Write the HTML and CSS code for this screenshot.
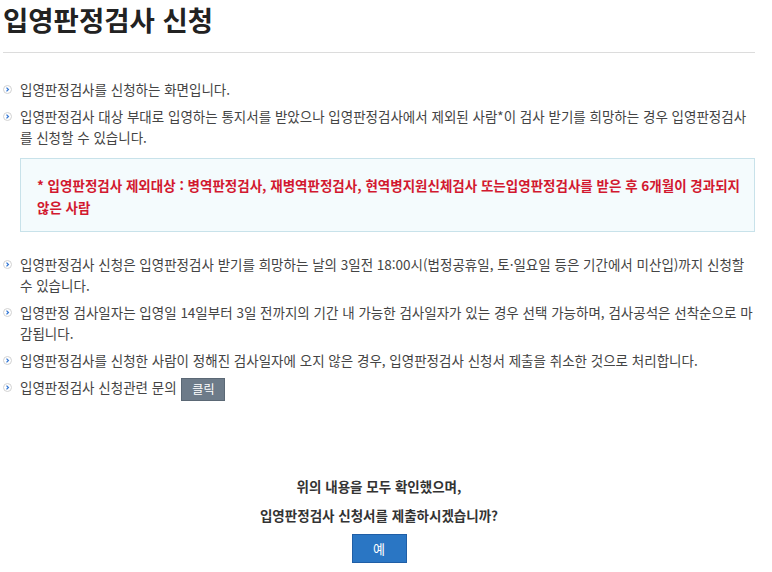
FILE: index.html
```html
<!DOCTYPE html>
<html lang="ko">
<head>
<meta charset="utf-8">
<title>입영판정검사 신청</title>
<link rel="stylesheet" href="styles.css">
</head>
<body>
<div class="page">
  <h1 class="title">입영판정검사 신청</h1>
  <ul class="info">
    <li class="item">입영판정검사를 신청하는 화면입니다.</li>
    <li class="item">입영판정검사 대상 부대로 입영하는 통지서를 받았으나 입영판정검사에서 제외된 사람*이 검사 받기를 희망하는 경우 입영판정검사를 신청할 수 있습니다.</li>
  </ul>
  <div class="notice">* 입영판정검사 제외대상 : 병역판정검사, 재병역판정검사, 현역병지원신체검사 또는입영판정검사를 받은 후 6개월이 경과되지 않은 사람</div>
  <ul class="info">
    <li class="item">입영판정검사 신청은 입영판정검사 받기를 희망하는 날의 3일전 18:00시(법정공휴일, 토·일요일 등은 기간에서 미산입)까지 신청할 수 있습니다.</li>
    <li class="item">입영판정 검사일자는 입영일 14일부터 3일 전까지의 기간 내 가능한 검사일자가 있는 경우 선택 가능하며, 검사공석은 선착순으로 마감됩니다.</li>
    <li class="item">입영판정검사를 신청한 사람이 정해진 검사일자에 오지 않은 경우, 입영판정검사 신청서 제출을 취소한 것으로 처리합니다.</li>
    <li class="item">입영판정검사 신청관련 문의 <button class="btn-small" type="button">클릭</button></li>
  </ul>
  <div class="confirm">
    <p class="confirm-line">위의 내용을 모두 확인했으며,</p>
    <p class="confirm-line">입영판정검사 신청서를 제출하시겠습니까?</p>
    <button class="btn-yes" type="button">예</button>
  </div>
</div>
</body>
</html>
```

FILE: styles.css
```css
html, body {
  margin: 0;
  padding: 0;
  background: #fff;
}
body {
  font-family: "Noto Sans CJK KR", "Noto Sans", sans-serif;
  color: #444;
  font-size: 13.5px;
}
.page {
  width: 752px;
  padding: 0 0 0 3px;
}
.title {
  margin: 0;
  padding: 1px 0 0 0;
  height: 51px;
  line-height: 36px;
  font-size: 27.5px;
  font-weight: 700;
  color: #222;
  border-bottom: 1px solid #dcdcdc;
}
.info {
  list-style: none;
  margin: 0;
  padding: 0;
}
.info:first-of-type {
  margin-top: 26px;
}
.item {
  position: relative;
  padding-left: 17px;
  line-height: 21px;
  margin-bottom: 6px;
}
.item::before {
  content: "";
  position: absolute;
  left: 0;
  top: 6px;
  width: 9px;
  height: 9px;
  border: 1px solid #d2d2d2;
  border-radius: 50%;
  box-sizing: border-box;
  background:
    url("data:image/svg+xml;utf8,<svg xmlns='http://www.w3.org/2000/svg' width='9' height='9' viewBox='0 0 9 9'><path d='M3.5 2.6 L5.4 4.5 L3.5 6.4' fill='none' stroke='%233a7bd5' stroke-width='1.3'/></svg>") center/9px 9px no-repeat;
}
.notice {
  margin: 10px 0 22px 17px;
  padding: 15px 8px 13px 16px;
  background: #f4fbfd;
  border: 1px solid #c8e2ea;
  color: #d2182f;
  font-weight: 700;
  line-height: 22px;
}
.btn-small {
  font-family: inherit;
  font-size: 12px;
  color: #fff;
  background: #6d7b89;
  border: 1px solid #5b6875;
  height: 23px;
  width: 44px;
  padding: 0;
  margin-left: 1px;
  vertical-align: middle;
  line-height: 20px;
}
.confirm {
  margin-top: 74px;
  text-align: center;
}
.confirm-line {
  margin: 0 0 7px 0;
  line-height: 22px;
  font-weight: 700;
  color: #333;
}
.btn-yes {
  font-family: inherit;
  font-size: 13px;
  color: #fff;
  background: #2a76c4;
  border: 1px solid #1f5ea6;
  width: 55px;
  height: 29px;
  padding: 0;
  margin-top: 1px;
}
```
